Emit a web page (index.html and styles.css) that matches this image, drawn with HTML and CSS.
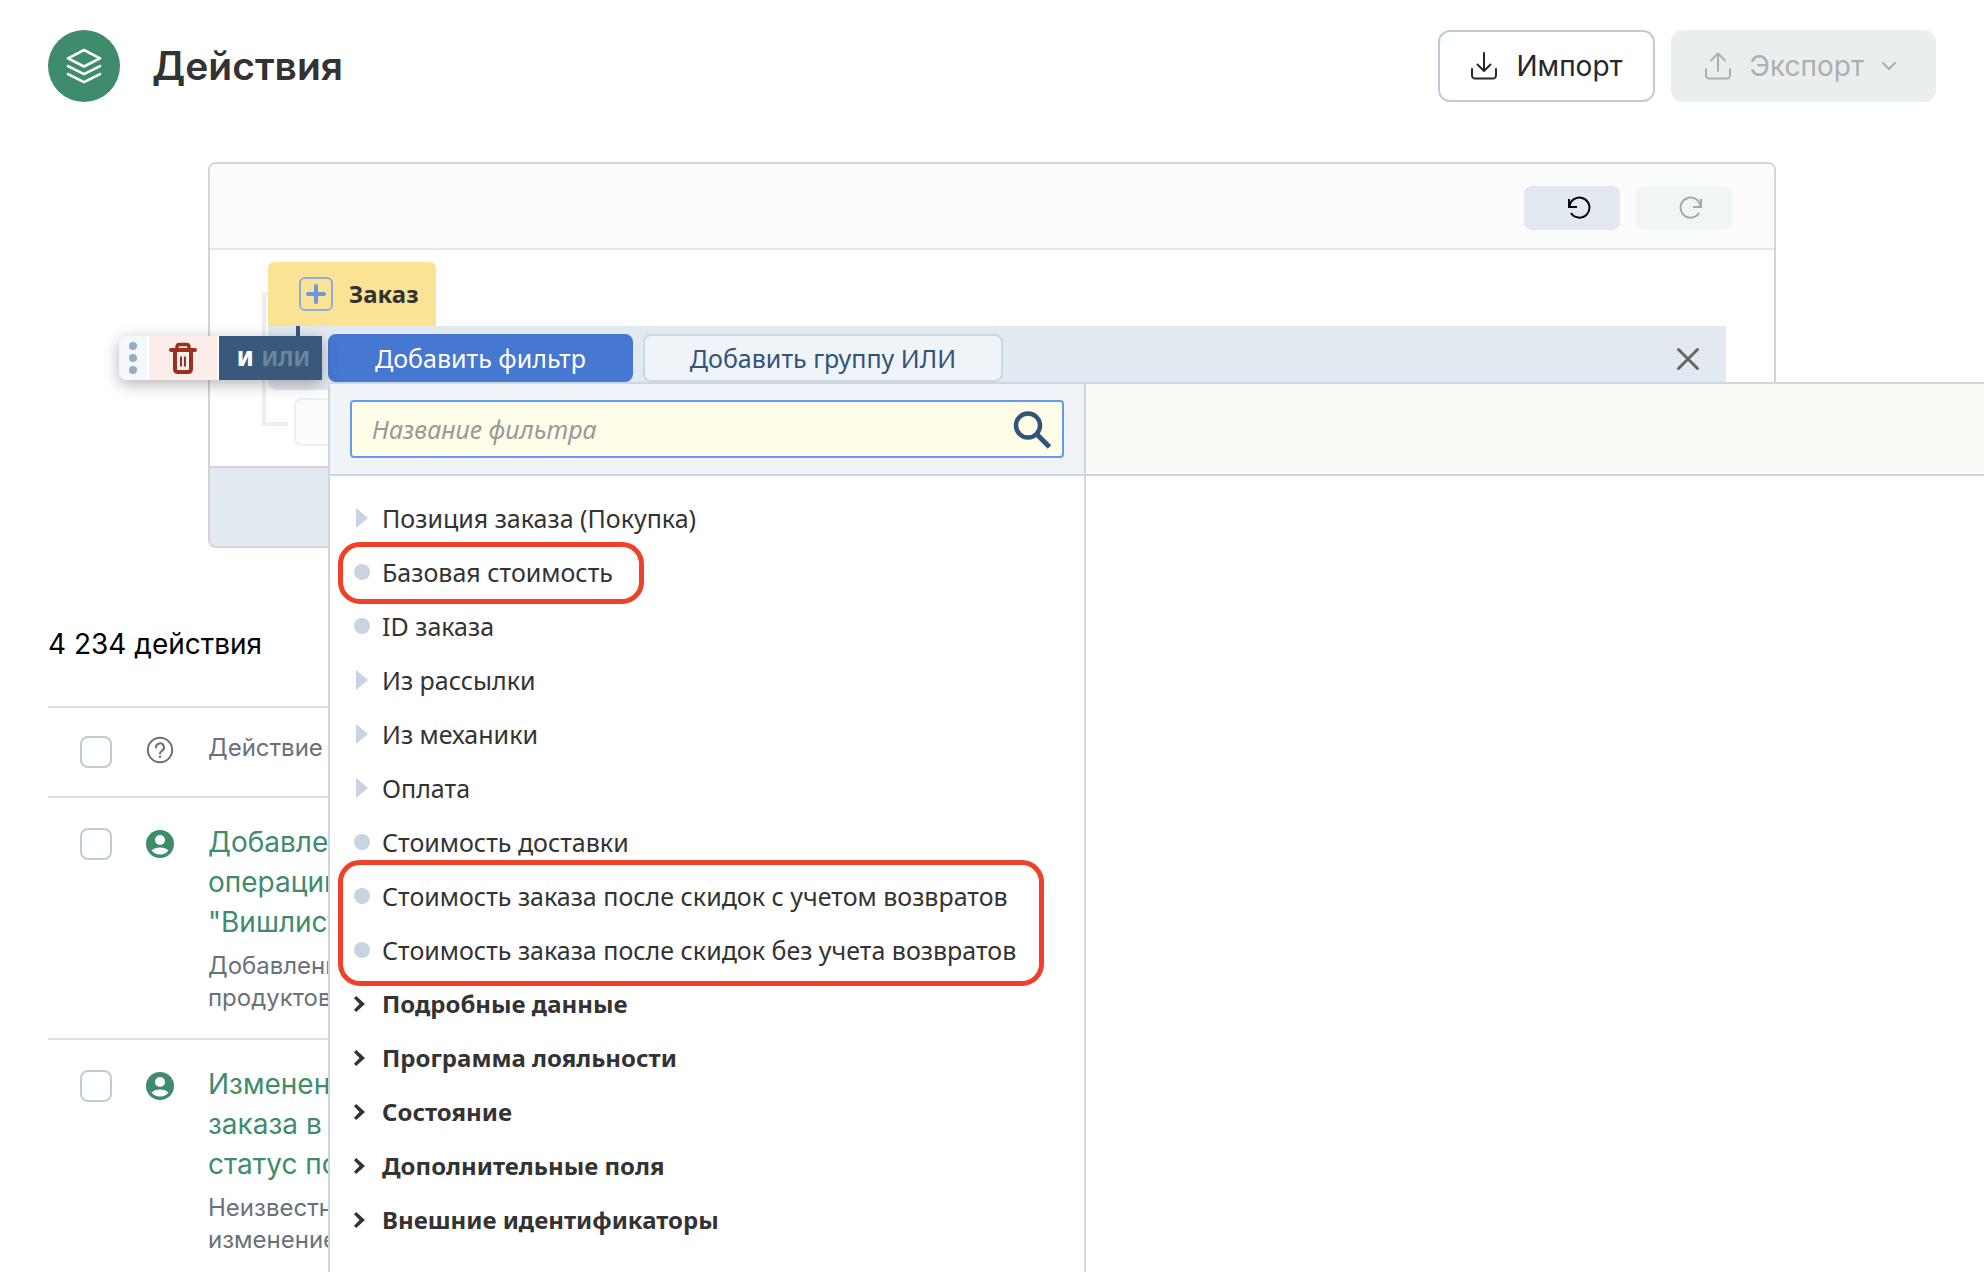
FILE: index.html
```html
<!DOCTYPE html>
<html lang="ru">
<head>
<meta charset="utf-8">
<title>Действия</title>
<link rel="stylesheet" href="styles.css">
</head>
<body>
<header class="page-header">
  <span class="page-badge">
    <svg width="36" height="36" viewBox="0 0 36 36" fill="none" stroke="#fff" stroke-width="2.6" stroke-linejoin="round" stroke-linecap="round"><path d="M18 2 34 10.300 18 18.500 2 10.300Z"/><path d="M2 18.200 18 26.200 34 18.200"/><path d="M2 26.200 18 34.200 34 26.200"/></svg>
  </span>
  <h1 class="page-title">Действия</h1>
  <div class="page-actions">
    <button class="action" type="button">
      <svg width="28" height="28" viewBox="0 0 28 28" fill="none" stroke="currentColor" stroke-width="2" stroke-linecap="round" stroke-linejoin="round"><path d="M14 1v18M7.500 12.500l6.500 6.500 6.500-6.500M2 17v6.500a3 3 0 0 0 3 3h18a3 3 0 0 0 3-3V17"/></svg>
      Импорт
    </button>
    <button class="action action-disabled" type="button" disabled>
      <svg width="28" height="28" viewBox="0 0 28 28" fill="none" stroke="currentColor" stroke-width="2" stroke-linecap="round" stroke-linejoin="round"><path d="M14 19V1.500M7 8.500l7-7 7 7M2 17v6.500a3 3 0 0 0 3 3h18a3 3 0 0 0 3-3V17"/></svg>
      Экспорт
      <svg class="caret" width="14" height="10" viewBox="0 0 14 10" fill="none" stroke="currentColor" stroke-width="2" stroke-linecap="round" stroke-linejoin="round"><path d="M1 2l6 6 6-6"/></svg>
    </button>
  </div>
</header>

<main class="page-main">
  <section class="card">
    <div class="card-bar">
      <button class="history" type="button" aria-label="Отменить">
        <svg width="24" height="24" viewBox="0 0 24 24" fill="none" stroke="currentColor" stroke-width="2"><path d="M2 3v8h8"/><path d="M2.500 10.500A10 10 0 1 1 4 17"/></svg>
      </button>
      <button class="history history-disabled" type="button" aria-label="Повторить" disabled>
        <svg width="24" height="24" viewBox="0 0 24 24" fill="none" stroke="currentColor" stroke-width="2"><path d="M22 3v8h-8"/><path d="M21.500 10.500A10 10 0 1 0 20 17"/></svg>
      </button>
    </div>
    <div class="card-body">
      <span class="branch"></span>
      <div class="entity">
        <span class="plus"><svg width="20" height="22" viewBox="0 0 20 22" stroke="#6f97dc" stroke-width="4" stroke-linecap="round"><path d="M10 3v16M2 11h16"/></svg></span>
        Заказ
      </div>
      <div class="group">
        <span class="stem"></span>
        <div class="group-tools">
          <button class="grip" type="button" aria-label="Переместить"><i></i><i></i><i></i></button>
          <button class="trash" type="button" aria-label="Удалить">
            <svg width="28" height="34" viewBox="0 0 28 34" fill="none" stroke="#98311f"><path stroke-width="4" stroke-linecap="round" d="M2 9h24"/><path stroke-width="3.500" d="M8 9V6q0-2.500 2.500-2.500h7Q20 3.500 20 6v3"/><path stroke-width="4" d="M6 9v19q0 3 3 3h10q3 0 3-3V9"/><path stroke-width="2" d="M12 15.500v10M16 15.500v10"/></svg>
          </button>
          <button class="logic" type="button"><b>И</b><span>ИЛИ</span></button>
        </div>
        <button class="add add-primary" type="button">Добавить фильтр</button>
        <button class="add" type="button">Добавить группу ИЛИ</button>
        <button class="close" type="button" aria-label="Закрыть"><svg width="24" height="24" viewBox="0 0 24 24" stroke="#666" stroke-width="3" stroke-linecap="round"><path d="M2.500 2.500l19 19M21.500 2.500l-19 19"/></svg></button>

        <div class="picker">
          <div class="picker-main">
            <div class="picker-search">
              <label class="search">
                <input type="text" placeholder="Название фильтра" aria-label="Название фильтра">
                <svg width="40" height="40" viewBox="0 0 40 40" fill="none" stroke="#315578"><circle cx="16" cy="16.500" r="12" stroke-width="4.500"/><path stroke-width="5" d="M25 25.500l12.500 12.500"/></svg>
              </label>
            </div>
            <div class="picker-list">
              <button class="item item-branch" type="button">Позиция заказа (Покупка)</button>
              <div class="marked marked-short"><button class="item item-leaf" type="button">Базовая стоимость</button></div>
              <button class="item item-leaf" type="button">ID заказа</button>
              <button class="item item-branch" type="button">Из рассылки</button>
              <button class="item item-branch" type="button">Из механики</button>
              <button class="item item-branch" type="button">Оплата</button>
              <button class="item item-leaf" type="button">Стоимость доставки</button>
              <div class="marked marked-long">
                <button class="item item-leaf" type="button">Стоимость заказа после скидок с учетом возвратов</button>
                <button class="item item-leaf" type="button">Стоимость заказа после скидок без учета возвратов</button>
              </div>
              <button class="item item-folder" type="button">Подробные данные</button>
              <button class="item item-folder" type="button">Программа лояльности</button>
              <button class="item item-folder" type="button">Состояние</button>
              <button class="item item-folder" type="button">Дополнительные поля</button>
              <button class="item item-folder" type="button">Внешние идентификаторы</button>
            </div>
          </div>
          <div class="picker-side"><div class="picker-side-head"></div></div>
        </div>
      </div>
      <div class="ghost"></div>
    </div>
    <div class="card-foot"></div>
  </section>

  <p class="total">4 234 действия</p>

  <table class="actions">
    <thead>
      <tr>
        <th class="col-check"><input type="checkbox" aria-label="Выбрать все"></th>
        <th class="col-icon"><svg width="28" height="28" viewBox="0 0 28 28" fill="none" stroke="#687278" stroke-width="2"><circle cx="14" cy="14" r="12.200"/><path stroke-linecap="round" d="M10 11.500a4 4 0 1 1 6 3.300q-2 1.200-2 2.700"/><circle cx="14" cy="20.800" r=".6" stroke-width="1.200"/></svg></th>
        <th class="col-name">Действие</th>
      </tr>
    </thead>
    <tbody>
      <tr>
        <td class="col-check"><input type="checkbox" aria-label="Выбрать действие"></td>
        <td class="col-icon"><svg width="28" height="28" viewBox="0 0 28 28"><circle cx="14" cy="14" r="14" fill="#3f8c6c"/><circle cx="14" cy="10" r="5" fill="#fff"/><path fill="#fff" d="M5.500 20.500q3-3 8.500-3t8.500 3q-3 4-8.500 4t-8.500-4Z"/></svg></td>
        <td class="col-name"><a href="#">Добавление<br>операции<br>"Вишлист"</a><p>Добавление<br>продуктов</p></td>
      </tr>
      <tr>
        <td class="col-check"><input type="checkbox" aria-label="Выбрать действие"></td>
        <td class="col-icon"><svg width="28" height="28" viewBox="0 0 28 28"><circle cx="14" cy="14" r="14" fill="#3f8c6c"/><circle cx="14" cy="10" r="5" fill="#fff"/><path fill="#fff" d="M5.500 20.500q3-3 8.500-3t8.500 3q-3 4-8.500 4t-8.500-4Z"/></svg></td>
        <td class="col-name"><a href="#">Изменение<br>заказа в<br>статус по</a><p>Неизвестно<br>изменение</p></td>
      </tr>
    </tbody>
  </table>
</main>
</body>
</html>
```
FILE: styles.css
```css
*, *::before, *::after { box-sizing: border-box; }

body {
  margin: 0;
  min-height: 100vh;
  background: #fff;
  color: #333;
  font: 28px/40px Inter, sans-serif;
}

button, input { font: inherit; color: inherit; }
button { margin: 0; padding: 0; border: 0; background: none; }
svg { display: block; flex: none; }

/* Header */
.page-header {
  display: flex;
  align-items: center;
  gap: 32px;
  padding: 30px 48px 0;
}
.page-badge {
  display: grid;
  place-items: center;
  width: 72px;
  height: 72px;
  border-radius: 50%;
  background: #3f8c6c;
}
.page-title { margin: 0; font-size: 39px; font-weight: 600; }
.page-actions { display: flex; gap: 16px; margin-left: auto; }
.action {
  display: flex;
  align-items: center;
  gap: 18px;
  height: 72px;
  padding: 0 30px;
  border: 2px solid #c0ccd5;
  border-radius: 12px;
  background: #fff;
  color: #26262c;
}
.action-disabled { padding: 0 38px 0 31px; border-color: #ebeeef; background: #ebeeef; color: #adafb0; }

/* Filter card */
.page-main { padding: 60px 48px 0; }
.card {
  margin: 0 160px;
  border: 2px solid #d4d4d4;
  border-radius: 8px;
}
.card-bar {
  display: flex;
  justify-content: flex-end;
  gap: 16px;
  padding: 22px 42px 18px;
  border-bottom: 2px solid #e2e9ee;
  border-radius: 6px 6px 0 0;
  background: #fcfcfc;
}
.history {
  display: grid;
  place-items: center;
  width: 96px;
  height: 44px;
  padding-left: 14px;
  border-radius: 8px;
  background: #e2e9f0;
  color: #000;
}
.history-disabled { background: #f2f5f6; color: #a6a8a8; }
.card-body {
  position: relative;
  padding: 12px 48px 20px 58px;
  font-family: "Noto Sans", sans-serif;
  font-size: 25px;
}
.branch {
  position: absolute;
  left: 52px;
  top: 42px;
  width: 26px;
  height: 134px;
  border: solid #ebeff5;
  border-width: 4px 0 4px 4px;
}
.entity {
  position: relative;
  display: flex;
  align-items: center;
  gap: 16px;
  width: 168px;
  height: 64px;
  padding-left: 31px;
  border-radius: 6px 6px 0 0;
  background: #fae394;
  font-size: 24px;
  font-weight: 700;
}
.plus {
  display: grid;
  place-items: center;
  width: 34px;
  height: 34px;
  border: 2px solid #8fabd6;
  border-radius: 6px;
}
.group {
  position: relative;
  display: flex;
  align-items: flex-start;
  gap: 10px;
  height: 64px;
  padding: 8px 26px 0 60px;
  border-radius: 0 0 8px 8px;
  background: #e2e9f0;
}
.stem {
  position: absolute;
  left: 28px;
  top: 0;
  width: 4px;
  height: 12px;
  background: #38597b;
}
.add {
  height: 48px;
  padding: 0 45px;
  border: 2px solid #cbd8e2;
  border-radius: 8px;
  background: #f0f4f8;
  color: #315578;
  white-space: nowrap;
}
.add-primary { border-color: #4677d1; background: #4677d1; color: #fff; }
.close { display: grid; place-items: center; height: 50px; margin-left: auto; }

.group-tools {
  position: absolute;
  left: -149px;
  top: 10px;
  display: flex;
  gap: 2px;
  border-radius: 8px 0 0 8px;
  background: #fff;
  box-shadow: 0 4px 16px rgba(0, 0, 0, .3);
}
.grip {
  display: flex;
  flex-direction: column;
  align-items: center;
  justify-content: center;
  gap: 4px;
  width: 28px;
  height: 44px;
  border-radius: 8px 0 0 8px;
  background: #f5f8fb;
}
.grip i { width: 8px; height: 8px; border-radius: 50%; background: #94adc2; }
.trash { display: grid; place-items: center; width: 68px; background: #fdedea; }
.logic {
  display: flex;
  align-items: center;
  justify-content: flex-end;
  gap: 8px;
  width: 103px;
  padding-right: 12px;
  background: #38597b;
  color: #6d869f;
  font-size: 21px;
  font-weight: 700;
}
.logic b { color: #fff; }

.ghost {
  width: 400px;
  height: 48px;
  margin: 8px 0 0 26px;
  border: 2px solid #ebf0f5;
  border-radius: 8px;
  background: #fafcfe;
}
.card-foot {
  height: 80px;
  border-top: 2px solid #d4d4d4;
  border-radius: 0 0 6px 6px;
  background: #e2e9f0;
}

/* Filter picker menu, stretched to the right edge of the window */
.picker {
  position: absolute;
  z-index: 2;
  left: 60px;
  right: -258px;
  top: 56px;
  display: grid;
  grid-template-columns: 756px 1fr;
  border: solid #cbd8e2;
  border-width: 2px 0 0 2px;
  border-radius: 6px 0 0 0;
  background: #fff;
}
.picker-main { border-right: 2px solid #cbd8e2; }
.picker-search {
  padding: 16px 20px;
  border-bottom: 2px solid #cbd8e2;
  background: #f0f4f8;
}
.search {
  display: flex;
  align-items: center;
  height: 58px;
  padding: 0 10px 0 20px;
  border: 2px solid #6699f5;
  border-radius: 4px;
  background: #fffde8;
}
.search input {
  flex: 1;
  min-width: 0;
  padding: 0;
  border: 0;
  outline: 0;
  background: none;
}
.search input::placeholder { color: #999; font-style: italic; opacity: 1; }
.picker-side-head { height: 92px; border-bottom: 2px solid #cbd8e2; background: #fafbf6; }
.picker-list { padding: 15px 24px 25px; }
.item {
  display: grid;
  grid-template-columns: 16px 1fr;
  align-items: center;
  gap: 12px;
  width: 100%;
  height: 54px;
  text-align: left;
  white-space: nowrap;
}
.item::before { content: ""; }
.item-leaf::before { height: 16px; border-radius: 50%; background: #c8d4e1; }
.item-branch::before {
  width: 12px;
  height: 20px;
  margin-left: 2px;
  background: #c8d4e1;
  clip-path: polygon(0 0, 100% 50%, 0 100%);
}
.item-folder { font-size: 24px; font-weight: 700; }
.item-folder::before {
  width: 11px;
  height: 16px;
  background: #333;
  clip-path: polygon(0 14%, 20% 0, 100% 50%, 20% 100%, 0 86%, 50% 50%);
}
.marked { position: relative; }
.marked::after {
  content: "";
  position: absolute;
  left: -16px;
  border: 5px solid #ee4128;
  border-radius: 22px;
  pointer-events: none;
}
.marked-short::after { top: -3px; bottom: -5px; width: 306px; }
.marked-long::after { top: -9px; bottom: -9px; width: 706px; }

/* Actions table */
.total { margin: 76px 0 42px; color: #000; }
.actions { width: 100%; border-collapse: collapse; }
.actions tr { border-top: 2px solid #dae2e7; }
.actions th, .actions td { padding: 0; vertical-align: top; text-align: left; font-weight: 400; }
.actions .col-check { width: 64px; padding: 30px 0 0 32px; }
.actions .col-icon { width: 64px; padding: 32px 0 0 34px; }
.actions .col-name { padding: 24px 0 24px 32px; }
.actions th.col-check { padding-top: 28px; }
.actions th.col-icon { padding-top: 28px; }
.actions th.col-name { height: 90px; font-size: 24px; line-height: 32px; color: #687278; }
.actions tbody tr:last-child .col-name { padding-bottom: 16px; }
.actions input {
  display: block;
  appearance: none;
  width: 32px;
  height: 32px;
  margin: 0;
  border: 2px solid #c0ccd5;
  border-radius: 8px;
  background: #fff;
}
.actions a { color: #3f8c6c; text-decoration: none; }
.actions p { margin: 8px 0 0; font-size: 24px; line-height: 32px; color: #687278; }
```
